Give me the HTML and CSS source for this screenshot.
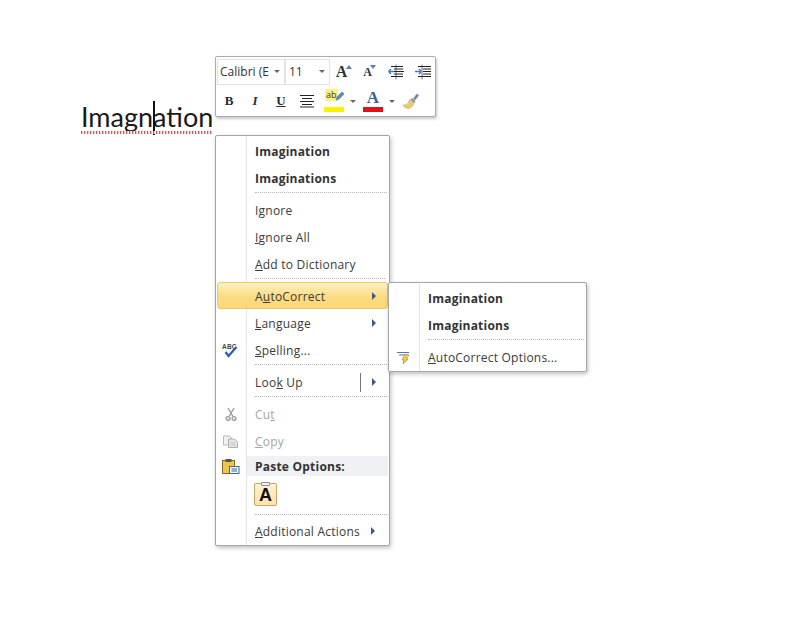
FILE: index.html
```html
<!DOCTYPE html>
<html lang="en">
<head>
<meta charset="utf-8">
<title>Imagnation</title>
<link rel="stylesheet" href="styles.css">
</head>
<body>
<main class="doc">
  <p class="word"><span class="squiggle">Imagn<span class="caret"></span>ation</span></p>
</main>

<div class="toolbar">
  <div class="tb-row tb-row1">
    <div class="combos">
      <div class="combo combo-font"><span class="combo-text">Calibri (E</span><span class="tri"></span></div>
      <div class="combo combo-size"><span class="combo-text">11</span><span class="tri"></span></div>
    </div>
    <span class="tb-btn"><span class="big-a">A</span><svg class="mini" width="6" height="4" viewBox="0 0 6 4"><path d="M0 4L3 0l3 4z" fill="#5f7fa8"/></svg></span>
    <span class="tb-btn"><span class="small-a">A</span><svg class="mini mini2" width="6" height="4" viewBox="0 0 6 4"><path d="M0 0h6L3 4z" fill="#5f7fa8"/></svg></span>
    <span class="tb-btn tb-gap"><svg width="18" height="16" viewBox="0 0 18 16"><path d="M9 .5v15" stroke="#777" fill="none"/><path d="M4 2.500h12M7 5h9M7 7.500h10M7 10h9M4 12.500h12" stroke="#222" fill="none"/><path d="M7 7.500H1.500M1.500 7.500L4 5M1.500 7.500L4 10" stroke="#3f7fc4" stroke-width="1.400" fill="none"/></svg></span>
    <span class="tb-btn tb-gap"><svg width="18" height="16" viewBox="0 0 18 16"><path d="M8 .5v15" stroke="#777" fill="none"/><path d="M4 2.500h13M9 5h8M9 7.500h8M9 10h8M4 12.500h13" stroke="#222" fill="none"/><path d="M1 7.500h6.500M7.500 7.500L5 5M7.500 7.500L5 10" stroke="#3f7fc4" stroke-width="1.400" fill="none"/></svg></span>
  </div>
  <div class="tb-row tb-row2">
    <span class="tb-btn fmt fmt-b">B</span>
    <span class="tb-btn fmt fmt-i">I</span>
    <span class="tb-btn fmt fmt-u">U</span>
    <span class="tb-btn"><svg width="16" height="14" viewBox="0 0 16 14"><path d="M1 1.500h14M3 4.500h10M1 7.500h14M3 10.500h10M1 13h14" stroke="#222" fill="none"/></svg></span>
    <span class="tb-btn tb-gap color-btn"><span class="ab">ab</span><svg class="pen" width="10" height="11" viewBox="0 0 10 11"><path d="M1 9l1-3 5-5 2 2-5 5z" fill="#5c8fc9" stroke="#3b6ea6" stroke-width=".6"/></svg><span class="bar bar-y"></span></span>
    <span class="tb-caret"><span class="tri"></span></span>
    <span class="tb-btn tb-gap2 color-btn"><span class="fc">A</span><span class="bar bar-r"></span></span>
    <span class="tb-caret"><span class="tri"></span></span>
    <span class="tb-btn tb-gap"><svg width="18" height="18" viewBox="0 0 18 18"><path d="M11 6.500l4-5 2 2-4 5z" fill="#6d8fc0"/><path d="M10 6l3.500 3.500-1.500 1.500-3.500-3.500z" fill="#8f8f8f"/><path d="M8 7.500l4 4c-1 2.500-3 4.500-6 5-2-.3-4-1.500-5-3.500 3.500.3 4.500-.5 7-5.500z" fill="#e8cb74" stroke="#bd9a45" stroke-width=".5"/></svg></span>
  </div>
</div>

<nav class="menu menu-main">
  <div class="item bold"><span class="ico"></span><span class="lbl">Imagination</span></div>
  <div class="item bold"><span class="ico"></span><span class="lbl">Imaginations</span></div>
  <div class="sep sep-a"></div>
  <div class="item"><span class="ico"></span><span class="lbl">I<u>g</u>nore</span></div>
  <div class="item"><span class="ico"></span><span class="lbl"><u>I</u>gnore All</span></div>
  <div class="item"><span class="ico"></span><span class="lbl"><u>A</u>dd to Dictionary</span></div>
  <div class="sep sep-b"></div>
  <div class="item active"><span class="ico"></span><span class="lbl">A<u>u</u>toCorrect</span><span class="arrow"></span></div>
  <div class="item"><span class="ico"></span><span class="lbl"><u>L</u>anguage</span><span class="arrow"></span></div>
  <div class="item"><span class="ico">
    <svg width="18" height="16" viewBox="0 0 18 16"><text x="0" y="6" class="abc">ABC</text><path d="M3.500 9l3 4 8-9" stroke="#2a5db0" stroke-width="2.200" fill="none"/></svg>
  </span><span class="lbl"><u>S</u>pelling...</span></div>
  <div class="sep sep-c"></div>
  <div class="item"><span class="ico"></span><span class="lbl">Loo<u>k</u> Up</span><span class="split"></span><span class="arrow"></span></div>
  <div class="sep sep-d"></div>
  <div class="item disabled"><span class="ico">
    <svg width="12" height="15" viewBox="0 0 12 15"><path d="M3 1l5 8.500M9 1L4 9.500" stroke="#9a9a9a" stroke-width="1.400" fill="none"/><circle cx="3" cy="11.500" r="2" fill="#ddd" stroke="#9a9a9a" stroke-width="1.200"/><circle cx="9" cy="11.500" r="2" fill="#ddd" stroke="#9a9a9a" stroke-width="1.200"/></svg>
  </span><span class="lbl">Cu<u>t</u></span></div>
  <div class="item disabled"><span class="ico">
    <svg width="16" height="13" viewBox="0 0 16 13"><path d="M.5 1h6l2 2v7H.5z" fill="#f1f1f1" stroke="#bbb"/><path d="M5.500 4h6l3 3v5.500h-9z" fill="#e4e4e4" stroke="#b0b0b0"/><path d="M7.500 8h5M7.500 10h5" stroke="#c4c4c4"/></svg>
  </span><span class="lbl"><u>C</u>opy</span></div>
  <div class="item-head"><span class="ico">
    <svg width="18" height="17" viewBox="0 0 18 17"><rect x=".5" y="2.500" width="12" height="13" fill="#eec450" stroke="#8b6a22"/><rect x="3.500" y="1" width="6" height="3" fill="#555"/><rect x="7.500" y="8.500" width="9.500" height="7" fill="#eef3fa" stroke="#47688f"/><path d="M9.500 11h5.500M9.500 13h5.500" stroke="#47688f"/></svg>
  </span><span class="head-lbl">Paste Options:</span></div>
  <div class="paste-row"><span class="paste-btn">A<span class="clip"></span></span></div>
  <div class="sep sep-e"></div>
  <div class="item"><span class="ico"></span><span class="lbl"><u>A</u>dditional Actions</span><span class="arrow arrow-near"></span></div>
</nav>

<nav class="menu menu-sub">
  <div class="item bold"><span class="ico"></span><span class="lbl">Imagination</span></div>
  <div class="item bold"><span class="ico"></span><span class="lbl">Imaginations</span></div>
  <div class="sep sep-s"></div>
  <div class="item"><span class="ico">
    <svg width="16" height="14" viewBox="0 0 16 14"><path d="M1 1.500h12M3 4h9" stroke="#4d78b5" fill="none"/><path d="M9 3l4 1-3 4h2l-5 5 1-4H6z" fill="#f0cf55" stroke="#a78a2c" stroke-width=".7"/></svg>
  </span><span class="lbl"><u>A</u>utoCorrect Options...</span></div>
</nav>
</body>
</html>
```

FILE: styles.css
```css
* { box-sizing: border-box; }
html, body { margin: 0; height: 100%; background: #fff; }
body { font-family: "Open Sans", "Noto Sans", sans-serif; color: #333; overflow: hidden; }

.doc { padding: 98px 0 0 81px; }
.word { margin: 0; font-family: Lato, sans-serif; font-size: 27px; line-height: 38px; color: #1a1a1a; }
.squiggle { position: relative; display: inline-block; }
.squiggle::after {
  content: ""; position: absolute; left: 0; right: 0; bottom: 2px; height: 3px;
  background: repeating-linear-gradient(90deg, #d9534f 0 1px, #f3c6c4 1px 2px, #fff 2px 3px);
}
.caret { position: absolute; left: 72px; top: 3px; width: 2px; height: 34px; background: #111; }

.toolbar {
  position: absolute; left: 215px; top: 56px; width: 221px; height: 61px;
  background: #fff; border: 1px solid #a9acb3; border-radius: 2px;
  box-shadow: 1px 2px 3px rgba(0,0,0,.22);
}
.tb-row { display: flex; align-items: center; }
.tb-row1 { height: 27px; margin-top: 1px; padding-left: 1px; }
.tb-row2 { height: 30px; margin-top: 1px; }
.combos { display: flex; border: 1px solid #e3e3e3; height: 26px; }
.combo { display: flex; align-items: center; justify-content: space-between; font-size: 12px; color: #333; padding: 0 4px 0 2px; }
.combo-font { width: 68px; border-right: 2px solid #e3e3e3; }
.combo-size { width: 43px; padding-left: 3px; }
.combo-text { white-space: nowrap; overflow: hidden; }
.tri { width: 0; height: 0; border-left: 3px solid transparent; border-right: 3px solid transparent; border-top: 3px solid #666; flex: none; }

.tb-btn { position: relative; width: 26px; height: 26px; display: flex; align-items: center; justify-content: center; flex: none; }
.tb-gap { margin-left: 1px; }
.tb-gap2 { margin-left: 2px; }
.tb-caret { width: 11px; display: flex; justify-content: center; flex: none; }
.big-a { font: bold 16px "Liberation Serif", serif; color: #333; margin-right: 3px; }
.small-a { font: bold 12px "Liberation Serif", serif; color: #333; margin-right: 3px; margin-top: 2px; }
.mini { position: absolute; left: 16px; top: 6px; }
.mini2 { left: 14px; }
.fmt { font-family: "Liberation Serif", serif; font-size: 13px; font-weight: bold; color: #2c2c2c; }
.fmt-i { font-style: italic; }
.fmt-u { text-decoration: underline; }
.color-btn { display: block; }
.ab { position: absolute; left: 4px; top: 1px; font-size: 9px; line-height: 12px; color: #333; background: #fdf27a; padding: 0 1px; }
.pen { position: absolute; left: 14px; top: 3px; }
.bar { position: absolute; left: 3px; top: 19px; width: 20px; height: 5px; }
.bar-y { background: #fff200; }
.bar-r { background: #e2101a; }
.fc { position: absolute; left: 0; right: 0; top: 0; text-align: center; font: bold 17px/20px "Liberation Serif", serif; color: #3b5f9a; }

.menu {
  position: absolute; background: #fff; border: 1px solid #a3a5a9; border-radius: 2px;
  box-shadow: 1px 2px 4px rgba(0,0,0,.25);
  background-image: linear-gradient(#e2e4e7, #e2e4e7);
  background-repeat: no-repeat; background-size: 1px 100%; background-position: 30px 0;
}
.menu-main { left: 215px; top: 135px; width: 175px; height: 411px; padding: 2px 1px 0; }
.menu-sub { left: 388px; top: 282px; width: 199px; height: 90px; padding: 2px 1px 0; z-index: 2; }

.item { display: flex; align-items: center; height: 27px; font-size: 12px; letter-spacing: .22px; color: #3a3a3a; }
.ico { width: 28px; margin-right: 1px; flex: none; display: flex; justify-content: center; align-items: center; }
.lbl { margin-left: 9px; white-space: nowrap; }
.bold { font-weight: 700; color: #333; }
.disabled { color: #a6a6a6; }
.active {
  width: 171px; margin-bottom: 1px; padding-top: 2px;
  border: 1px solid #e8c96d; border-radius: 3px;
  background: linear-gradient(#fdf0c0, #fcdc83 55%, #fbd876);
}
.active .ico { width: 27px; }
.arrow { width: 0; height: 0; border-top: 4px solid transparent; border-bottom: 4px solid transparent; border-left: 4px solid #3d5a80; margin-left: auto; margin-right: 12px; flex: none; position: relative; top: -1px; }
.active .arrow { margin-right: 11px; }
.arrow-near { margin-left: 11px; }
.split { width: 1px; height: 19px; background: #777; margin-left: auto; }
.split + .arrow { margin-left: 11px; }

.sep { margin-left: 38px; margin-right: 1px; border-top: 1px dotted #b5b5b5; }
.sep-a { height: 5px; }
.sep-b { height: 4px; margin-right: 3px; }
.sep-c { height: 5px; }
.sep-d { height: 5px; }
.sep-e { height: 4px; }
.sep-s { height: 5px; }

.item-head { display: flex; align-items: center; height: 20px; margin-top: 1px; }
.head-lbl { flex: 1; align-self: stretch; margin-left: 1px; padding-left: 8px; background: #f0f1f4; font-size: 12px; font-weight: 700; letter-spacing: .22px; line-height: 22px; color: #333; }
.paste-row { height: 38px; padding: 7px 0 0 37px; }
.paste-btn {
  position: relative; display: flex; align-items: flex-end; justify-content: center;
  width: 23px; height: 23px;
  background: linear-gradient(#fff2d2, #fde3ad); border: 1px solid #c9a664; border-radius: 2px;
  font: 700 18px/20px "Liberation Sans", sans-serif; color: #111;
}
.clip { position: absolute; left: 6px; top: -2px; width: 9px; height: 4px; background: #f3f3f3; border: 1px solid #8f8f8f; border-radius: 1px; }
.abc { font: 700 6.500px "Liberation Sans", sans-serif; fill: #444; }
```
